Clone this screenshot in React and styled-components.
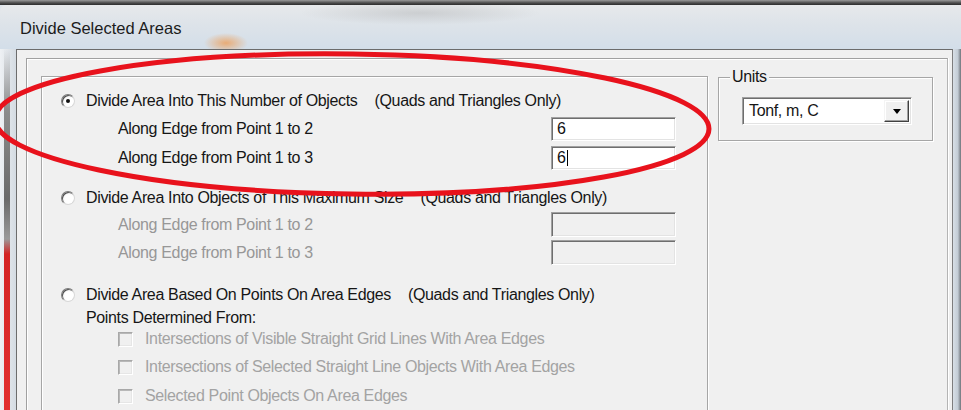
import styled, { createGlobalStyle } from 'styled-components';

const GlobalStyle = createGlobalStyle`
  html, body {
    margin: 0;
    padding: 0;
  }

  body {
    background: #f0f0f0;
    font-family: "Liberation Sans", Arial, sans-serif;
  }
`;

const App = () => (
  <>
    <GlobalStyle />
    <Page>
      <TopStrip />
      <TitleBar>
        <Title>Divide Selected Areas</Title>
      </TitleBar>
      <Frame>
        <LeftEdge />
        <Client>
          <Panel>
            <GroupBox>
              <OptionRow $mt={11}>
                <Radio $checked />
                <span>Divide Area Into This Number of Objects</span>
                <Note>(Quads and Triangles Only)</Note>
              </OptionRow>
              <FieldRow $mt={3}>
                <FieldLabel>Along Edge from Point 1 to 2</FieldLabel>
                <TextBox>6</TextBox>
              </FieldRow>
              <FieldRow $mt={5}>
                <FieldLabel>Along Edge from Point 1 to 3</FieldLabel>
                <TextBox>
                  6<Caret />
                </TextBox>
              </FieldRow>

              <OptionRow $mt={15}>
                <Radio />
                <span>Divide Area Into Objects of This Maximum Size</span>
                <Note>(Quads and Triangles Only)</Note>
              </OptionRow>
              <FieldRow $mt={1} $height={25}>
                <FieldLabel $disabled>Along Edge from Point 1 to 2</FieldLabel>
                <TextBox $disabled />
              </FieldRow>
              <FieldRow $mt={3} $height={25}>
                <FieldLabel $disabled>Along Edge from Point 1 to 3</FieldLabel>
                <TextBox $disabled />
              </FieldRow>

              <OptionRow $mt={17}>
                <Radio />
                <span>Divide Area Based On Points On Area Edges</span>
                <Note>(Quads and Triangles Only)</Note>
              </OptionRow>
              <SubLabel>Points Determined From:</SubLabel>
              <CheckRow $mt={0}>
                <CheckBox />
                <CheckText>Intersections of Visible Straight Grid Lines With Area Edges</CheckText>
              </CheckRow>
              <CheckRow $mt={6}>
                <CheckBox />
                <CheckText>Intersections of Selected Straight Line Objects With Area Edges</CheckText>
              </CheckRow>
              <CheckRow $mt={7}>
                <CheckBox />
                <CheckText>Selected Point Objects On Area Edges</CheckText>
              </CheckRow>
            </GroupBox>

            <UnitsBox>
              <Legend>Units</Legend>
              <Select>
                <SelectValue>Tonf, m, C</SelectValue>
                <SelectButton>
                  <Arrow />
                </SelectButton>
              </Select>
            </UnitsBox>
          </Panel>
        </Client>
        <RightEdge />
      </Frame>

      {/* hand-drawn red ring around the first option */}
      <Annotation width="961" height="410" viewBox="0 0 961 410">
        <ellipse
          cx="352"
          cy="124"
          rx="357"
          ry="70"
          fill="none"
          stroke="#e8121c"
          strokeWidth="5"
          transform="rotate(0.8 352 124)"
        />
      </Annotation>
    </Page>
  </>
);

export default App;

const Page = styled.div`
  position: relative;
  width: 961px;
  height: 410px;
  overflow: hidden;
  display: flex;
  flex-direction: column;
  background: #dfe5eb;
  color: #161616;
  font-size: 16px;
  letter-spacing: -0.35px;
`;

const TopStrip = styled.div`
  height: 5px;
  flex-shrink: 0;
  background: linear-gradient(to bottom, #9a9a9a 0%, #4a4a4a 60%, #2c2c2c 100%);
`;

const TitleBar = styled.div`
  height: 44px;
  flex-shrink: 0;
  display: flex;
  align-items: center;
  padding: 2px 0 0 20px;
  box-sizing: border-box;
  border-top-left-radius: 6px;
  background:
    radial-gradient(ellipse 22px 10px at 226px 38px, rgba(240, 150, 70, 0.7), rgba(240, 150, 70, 0) 100%),
    radial-gradient(ellipse 120px 12px at 420px 8px, rgba(150, 150, 150, 0.3), rgba(150, 150, 150, 0) 100%),
    linear-gradient(to bottom, #e7e9eb 0%, #dde3e9 45%, #d3dee9 100%);
`;

const Title = styled.span`
  font-size: 16.5px;
  letter-spacing: 0;
  color: #1c1c1c;
`;

const Frame = styled.div`
  flex: 1;
  display: flex;
  min-height: 0;
`;

const LeftEdge = styled.div`
  width: 16px;
  flex-shrink: 0;
  background:
    linear-gradient(
        to bottom,
        rgba(0, 0, 0, 0) 0px,
        #8d8d8d 60px,
        #6a6a6a 150px,
        #9a9a9a 190px,
        #d42424 205px,
        #e23030 360px
      )
      4px 0 / 6px 100% no-repeat,
    linear-gradient(to right, #eef1f4, #d4dbe2);
`;

const RightEdge = styled.div`
  width: 8px;
  flex-shrink: 0;
  background: linear-gradient(to right, #d8dfe6, #c3ccd5 60%, #6f747a 100%);
`;

const Client = styled.div`
  flex: 1;
  display: flex;
  padding: 8px 4px 0 9px;
  background: #f0f0f0;
  border-left: 1px solid #6c6c6c;
  border-top: 1px solid #6c6c6c;
  border-right: 1px solid #7d7d7d;
`;

const Panel = styled.div`
  flex: 1;
  display: flex;
  align-items: flex-start;
  gap: 10px;
  padding: 17px 14px 0 14px;
  border: 1px solid #a0a0a0;
  border-right-color: #b4b4b4;
  border-bottom: none;
  box-shadow: inset 1px 1px 0 #ffffff, 1px 0 0 #ffffff;
`;

const Etched = styled.div`
  position: relative;
  box-sizing: border-box;
  border: 1px solid #a6a6a6;
  box-shadow: inset 1px 1px 0 #ffffff, 1px 1px 0 #ffffff;
`;

const GroupBox = styled(Etched)`
  width: 667px;
  height: 360px;
  display: flex;
  flex-direction: column;
`;

const UnitsBox = styled(Etched)`
  width: 215px;
  margin-top: 1px;
  padding: 19px 0 15px 23px;
`;

const Legend = styled.span`
  position: absolute;
  top: -10px;
  left: 11px;
  padding: 0 2px;
  line-height: 18px;
  background: #f0f0f0;
`;

const OptionRow = styled.div`
  display: flex;
  align-items: center;
  height: 26px;
  margin-top: ${({ $mt }) => $mt}px;
  padding-left: 19px;
  white-space: nowrap;
`;

const Radio = styled.span`
  position: relative;
  width: 14px;
  height: 14px;
  margin-right: 11px;
  flex-shrink: 0;
  box-sizing: border-box;
  border-radius: 50%;
  border: 1px solid;
  border-color: #7c7c7c #d8d8d8 #d8d8d8 #7c7c7c;
  background: radial-gradient(circle at 60% 60%, #ffffff 40%, #e4e4e4 100%);
  box-shadow: inset 1px 1px 0 #4e4e4e;

  &::after {
    content: '';
    display: ${({ $checked }) => ($checked ? 'block' : 'none')};
    position: absolute;
    left: 4px;
    top: 4px;
    width: 4px;
    height: 4px;
    border-radius: 50%;
    background: #111;
  }
`;

const Note = styled.span`
  margin-left: 17px;
`;

const FieldRow = styled.div`
  display: flex;
  align-items: center;
  height: ${({ $height }) => $height || 24}px;
  margin-top: ${({ $mt }) => $mt}px;
  padding-left: 76px;
`;

const FieldLabel = styled.span`
  width: 433px;
  white-space: nowrap;
  color: ${({ $disabled }) => ($disabled ? '#979797' : 'inherit')};
`;

const TextBox = styled.div`
  width: 125px;
  height: 100%;
  box-sizing: border-box;
  display: flex;
  align-items: center;
  padding-left: 5px;
  border: 1px solid;
  border-color: #a0a0a0 #ffffff #ffffff #a0a0a0;
  box-shadow: inset 1px 1px 0 #6e6e6e, inset -1px -1px 0 #e3e3e3;
  background: ${({ $disabled }) => ($disabled ? '#f0f0f0' : '#ffffff')};
  color: #111;
`;

const Caret = styled.span`
  width: 1px;
  height: 16px;
  margin-left: 1px;
  background: #000;
`;

const SubLabel = styled.div`
  height: 20px;
  line-height: 20px;
  padding-left: 44px;
`;

const CheckRow = styled.div`
  display: flex;
  align-items: center;
  height: 22px;
  margin-top: ${({ $mt }) => $mt}px;
  padding-left: 76px;
`;

const CheckBox = styled.span`
  width: 15px;
  height: 15px;
  margin-right: 12px;
  flex-shrink: 0;
  box-sizing: border-box;
  border: 1px solid;
  border-color: #a8a8a8 #ffffff #ffffff #a8a8a8;
  box-shadow: inset 1px 1px 0 #b8b8b8, inset -1px -1px 0 #e6e6e6;
  background: #f0f0f0;
`;

const CheckText = styled.span`
  white-space: nowrap;
  color: #a3a3a3;
`;

const Select = styled.div`
  width: 170px;
  height: 28px;
  box-sizing: border-box;
  display: flex;
  align-items: center;
  padding: 2px;
  border: 1px solid;
  border-color: #a0a0a0 #ffffff #ffffff #a0a0a0;
  box-shadow: inset 1px 1px 0 #6e6e6e, inset -1px -1px 0 #e3e3e3;
  background: #ffffff;
`;

const SelectValue = styled.span`
  flex: 1;
  padding-left: 4px;
  white-space: nowrap;
`;

const SelectButton = styled.span`
  width: 25px;
  height: 22px;
  box-sizing: border-box;
  display: flex;
  align-items: center;
  justify-content: center;
  border: 1px solid;
  border-color: #f4f4f4 #404040 #404040 #f4f4f4;
  box-shadow: inset -1px -1px 0 #a0a0a0, inset 1px 1px 0 #ffffff;
  background: #f0f0f0;
`;

const Arrow = styled.span`
  width: 0;
  height: 0;
  margin-top: 1px;
  border-left: 4.5px solid transparent;
  border-right: 4.5px solid transparent;
  border-top: 5px solid #000;
`;

const Annotation = styled.svg`
  position: absolute;
  left: 0;
  top: 0;
  pointer-events: none;
`;
